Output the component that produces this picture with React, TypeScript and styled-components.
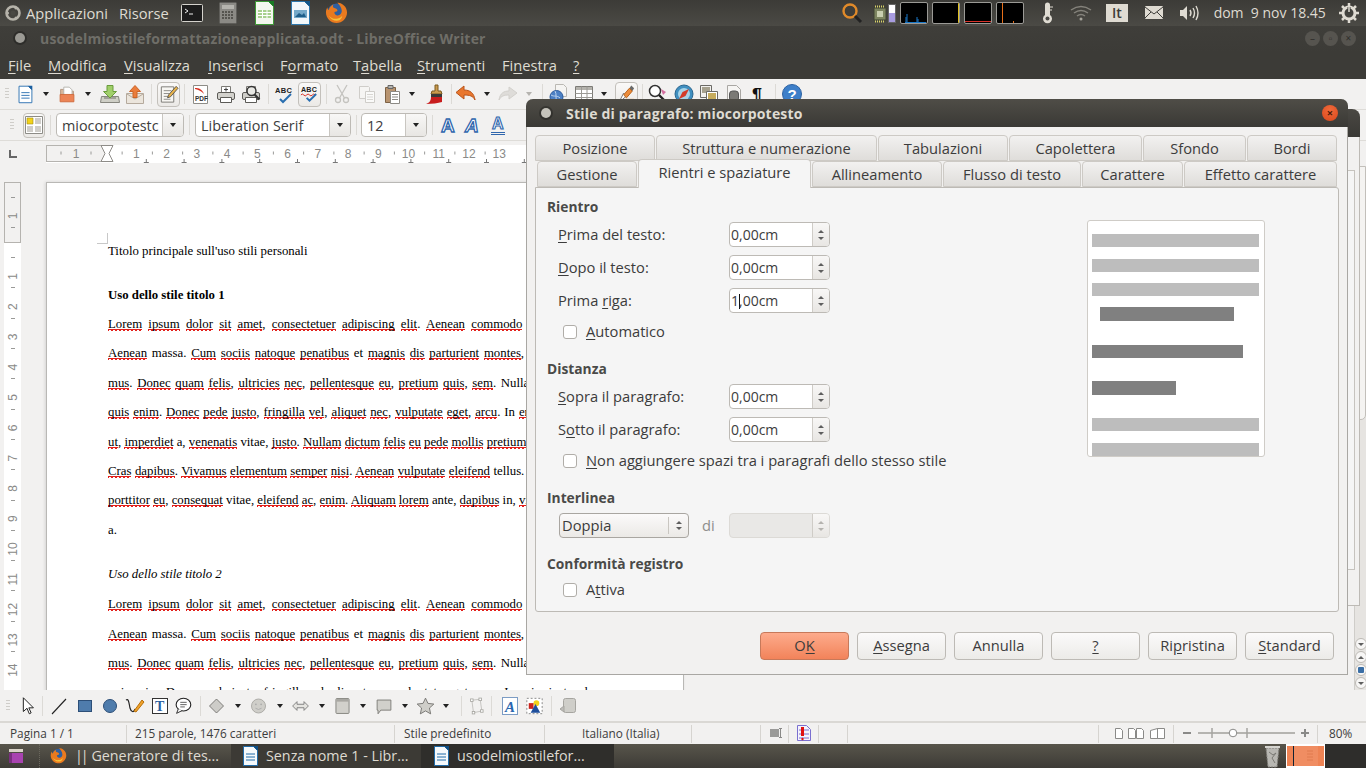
import React from "react";
import styled, { createGlobalStyle } from "styled-components";

const UI = `"Open Sans", "Noto Sans", sans-serif`;

const Global = createGlobalStyle`
  html, body { margin: 0; padding: 0; width: 1366px; height: 768px; overflow: hidden; background: #f2f1f0; }
  * { box-sizing: border-box; }
`;

const Desktop = styled.div`
  position: relative; width: 1366px; height: 768px; overflow: hidden;
  display: flex; flex-direction: column; font-family: ${UI}; background: #f2f1f0;
`;
const TopPanel = styled.div`
  height: 26px; flex: none; display: flex; align-items: center; color: #dfdbd2; font-size: 14.7px; padding-bottom: 1px;
  background: linear-gradient(#3c3b37, #4b4a45);
`;
const TrayGroup = styled.div`margin-left: auto; padding-right: 2px; display: flex; align-items: center; height: 100%;`;
const Slot = styled.div<{ $w: number }>`
  flex: 0 0 ${p => p.$w}px; width: ${p => p.$w}px; display: flex; align-items: center; justify-content: center;
  height: 100%; white-space: nowrap;
`;
const LeftSlot = styled(Slot)`justify-content: flex-start;`;
const ClockSlot = styled(LeftSlot)`font-size: 14px; padding-left: 2px;`;
const Graph = styled.div`
  width: 28px; height: 22px; margin-right: 4px; background: #000; border: 1px solid #9b9a96; border-radius: 2px;
  display: flex; overflow: hidden;
`;
const LangBox = styled.div`
  width: 22px; height: 18px; background: #dfdbd2; color: #3c3b37; font-size: 14px; font-weight: 600; text-align: center; line-height: 18px;
`;
const TitleBar = styled.div`
  height: 26px; flex: none; display: flex; align-items: center; background: linear-gradient(#3f3e3a, #3c3b37);
  color: #6f6e68; font-weight: 700; font-size: 14px; letter-spacing: .2px; padding: 0 0 2px 15px; position: relative;
`;
const WinDot = styled.span<{ $c?: string }>`
  width: 10px; height: 10px; border-radius: 50%; margin-right: 15px; flex: none;
  background: ${p => p.$c ?? "#9b9a94"}; box-shadow: 0 0 0 2px rgba(0,0,0,.25);
`;
const WinButtons = styled.div`margin-left: auto; margin-right: 10px; display: flex; gap: 3px;`;
const WinBtn = styled.div`
  width: 15px; height: 15px; border-radius: 50%; background: #56544f; color: #2f2e2b; font-size: 10px; line-height: 15px; text-align: center; font-weight: 400;
`;
const MenuBar = styled.div`
  height: 27px; flex: none; display: flex; align-items: center; padding: 0 0 2px 8px; background: #3c3b37; color: #dfdbd2; font-size: 14.7px;
  u { text-underline-offset: 2px; }
`;
const MenuItem = styled.div<{ $w: number }>`flex: 0 0 ${p => p.$w}px; white-space: nowrap;`;
const ToolRow = styled.div<{ $h: number; $line?: boolean }>`
  height: ${p => p.$h}px; flex: none; display: flex; align-items: center; background: #f2f1f0;
  border-bottom: ${p => (p.$line ? "1px solid #dedcd8" : "none")};
`;
const ToolSlot = styled.div<{ $w: number }>`
  flex: 0 0 ${p => p.$w}px; width: ${p => p.$w}px; height: 24px; display: flex; align-items: center; justify-content: center;
`;
const Boxed = styled.div`
  width: 23px; height: 25px; display: flex; align-items: center; justify-content: center;
  border: 1px solid #c3c0bb; border-radius: 4px; background: linear-gradient(#faf9f8, #ebe9e6);
`;
const Sep = styled.div`width: 1px; height: 20px; background: #dcdad6;`;
const Grip = styled.div`width: 4px; height: 12px; background: repeating-linear-gradient(#cfcdc9 0 1px, transparent 1px 3px);`;
const Caretish = styled.div<{ $off?: boolean }>`
  width: 0; height: 0; border-left: 3.5px solid transparent; border-right: 3.5px solid transparent;
  border-top: 4px solid ${p => (p.$off ? "#b5b3af" : "#222")};
`;
const Combo = styled.div<{ $w: number; $btn: number }>`
  flex: 0 0 ${p => p.$w}px; height: 24px; display: flex; align-items: stretch; background: #fff; border: 1px solid #bdbab5; border-radius: 4px;
  font-size: 14.4px; color: #3c3c3c; overflow: hidden;
  & > span { flex: 1; min-width: 0; padding-left: 5px; line-height: 23px; overflow: hidden; white-space: nowrap; }
  & > div { flex: 0 0 ${p => p.$btn}px; border-left: 1px solid #c9c6c1; background: linear-gradient(#f8f7f6, #e8e6e3); display: flex; align-items: center; justify-content: center; }
`;
const RulerRow = styled.div`height: 25px; flex: none; display: flex; align-items: center; background: #f2f1f0;`;
const Corner = styled.div`width: 46px; flex: none; padding-left: 9px; display: flex; align-items: center;`;
const Workspace = styled.div`flex: none; height: 524px; display: flex; background: #f2f1f0; overflow: hidden;`;
const VRulerBox = styled.div`margin: 16px 25px 0 4px; width: 17px; flex: none;`;
const Page = styled.div`
  margin-top: 16px; width: 638px; flex: none; height: 700px; background: #fff; border: 1px solid #b9b8b5; box-shadow: -1px 0 3px rgba(0,0,0,.12);
  padding: 57px 0 0 61px; font-family: "Liberation Serif", serif; font-size: 12.8px; color: #000; position: relative;
`;
const CropMark = styled.div`
  position: absolute; left: 50px; top: 50px; width: 11px; height: 11px; border-right: 1px solid #c8c8c8; border-bottom: 1px solid #c8c8c8;
`;
const Para = styled.div<{ $mt?: number }>`height: 22px; line-height: 22px; margin-top: ${p => p.$mt ?? 0}px; white-space: nowrap;`;
const Gap = styled.div<{ $h: number }>`height: ${p => p.$h}px; flex: none;`;
const HGap = styled.div<{ $w: number }>`width: ${p => p.$w}px; flex: none;`;
const Line = styled.div<{ $long?: boolean }>`
  width: 513px; height: 29.4px; line-height: 29.4px; overflow: hidden; text-align: justify; text-align-last: justify;
  white-space: ${p => (p.$long ? "nowrap" : "normal")};
`;
const LastLine = styled(Line)`text-align-last: left;`;
const Wavy = styled.span`
  background-image: linear-gradient(45deg, transparent 58%, #e3201b 62%, #e3201b 88%, transparent 92%), linear-gradient(135deg, transparent 8%, #e3201b 12%, #e3201b 38%, transparent 42%);
  background-size: 4px 3px; background-repeat: repeat-x; background-position: 0 100%;
  padding-bottom: 1px;
`;
const Filler = styled.div`flex: 1;`;
const VScroll = styled.div`
  width: 12px; flex: none; margin-right: 0; display: flex; flex-direction: column; align-items: center; border-left: 1px solid #cfcdc9; background: #e6e4e1;
`;
const ScrollThumb = styled.div`width: 11px; height: 254px; margin-top: 0; background: #f4f3f1; border: 1px solid #c2bfba; border-radius: 0 0 5px 5px;`;
const ScrollTrack = styled.div`flex: 1;`;
const ScrollEnd = styled.div`
  width: 12px; height: 12px; background: #f7f6f5; border: 1px solid #bdbab5; border-radius: 6px; margin-bottom: 1px; display: flex; align-items: center; justify-content: center;
`;
const StatusBar = styled.div`
  height: 23px; flex: none; display: flex; background: #f2f1f0; border-top: 2px solid #dad8d4; color: #3c3c3c; font-size: 11.8px; align-items: center;
`;
const StatusCell = styled.div<{ $w: number; $pl?: number; $line?: boolean }>`
  flex: 0 0 ${p => p.$w}px; height: 18px; line-height: 16px; padding-left: ${p => p.$pl ?? 0}px; padding-bottom: 2px; white-space: nowrap; display: flex; align-items: center;
  border-right: ${p => (p.$line === false ? "none" : "1px solid #d6d4d0")}; 
`;
const Taskbar = styled.div`
  height: 24px; flex: none; display: flex; align-items: center; color: #dfdbd2; font-size: 14.3px;
  background: linear-gradient(#58554b, #3d3b36);
`;
const TaskStart = styled.div`width: 40px; height: 100%; display: flex; align-items: center; padding-left: 8px; border-right: 1px dotted #6a675d;`;
const TaskItem = styled.div<{ $w: number; $pl?: number; $active?: number }>`
  flex: 0 0 ${p => p.$w}px; height: 100%; display: flex; align-items: center; gap: 8px; padding: 0 0 1px ${p => p.$pl ?? 10}px; white-space: nowrap; overflow: hidden;
  background: ${p => (p.$active === 2 ? "#2f2e2b" : p.$active === 1 ? "#3c3a35" : "transparent")};
`;
const Bars = styled.span`letter-spacing: -2px; margin-right: 1px;`;
const TaskRight = styled.div`margin-left: auto; display: flex; align-items: center; height: 100%;`;
const Switcher = styled.div`width: 39px; height: 100%; background: #ee8354; border: 1px solid #fff; border-width: 2px 1px; display: flex; align-items: center; justify-content: center;`;
const SwitcherRest = styled.div`width: 41px; height: 100%; background: #2e2d2b;`;

/* dialog */
const GhostWindow = styled.div`
  position: absolute; left: 1300px; top: 109px; width: 60px; height: 497px; background: #f2f1f0; border: 1px solid #bdbab5; border-top: 0; border-radius: 8px 8px 0 0;
`;
const GhostTitle = styled.div`height: 28px; background: linear-gradient(#4a4843, #3a3935); border-radius: 8px 8px 0 0; margin: 0 -1px;`;
const GhostInner = styled.div`margin: 33px 4px 0 0; height: 400px; border: 1px solid #c6c3be; background: #f5f5f5;`;
const Dialog = styled.div`
  position: absolute; left: 526px; top: 99px; width: 822px; height: 576px; background: #f2f1f0; border: 1px solid #a9a7a3; border-top: 0; border-radius: 7px 7px 0 0;
  color: #3c3c3c; font-size: 14.7px; display: flex; flex-direction: column;
  u { text-underline-offset: 2px; }
`;
const DialogTitle = styled.div`
  height: 28px; flex: none; margin: 0 -1px; display: flex; align-items: center; padding-left: 15px; color: #dfdbd2; font-weight: 700; font-size: 14px; letter-spacing: .2px;
  background: linear-gradient(#4f4d47, #3a3935); border-radius: 7px 7px 0 0;
`;
const CloseBtn = styled.div`
  margin-left: auto; margin-right: 10px; width: 16px; height: 16px; border-radius: 50%; background: radial-gradient(circle at 50% 30%, #f0693a, #d9481c);
  color: #4a1a08; font-size: 11px; line-height: 15px; text-align: center; font-weight: 700;
`;
const TabRow = styled.div<{ $pl: number; $mt?: number }>`
  display: flex; gap: 1px; padding-left: ${p => p.$pl}px; height: 26px; margin-top: ${p => p.$mt ?? 0}px; flex: none; align-items: flex-end; position: relative;
`;
const Tab = styled.div<{ $w: number; $on?: boolean; $lh?: number }>`
  flex: 0 0 ${p => p.$w}px; height: ${p => (p.$on ? 29 : 26)}px; border: 1px solid #cdcac5; border-bottom: ${p => (p.$on ? "0" : "1px solid #cdcac5")}; border-radius: 4px 4px 0 0;
  background: ${p => (p.$on ? "#f5f5f5" : "linear-gradient(#f2f1f0, #dfddda)")};
  text-align: center; line-height: ${p => p.$lh ?? 25}px; white-space: nowrap; position: relative; z-index: ${p => (p.$on ? 2 : 0)};
  margin-bottom: ${p => (p.$on ? -1 : 0)}px;
`;
const Panel = styled.div`
  margin: 0 8px; height: 425px; flex: none; background: #f5f5f5; border: 1px solid #bdbab5; border-radius: 0 3px 3px 3px; display: flex; position: relative; z-index: 1;
`;
const FormCol = styled.div`flex: 1; padding: 10px 0 0 11px;`;
const Heading = styled.div<{ $mt?: number }>`height: 18px; line-height: 18px; font-weight: 700; font-size: 13.8px; margin-top: ${p => p.$mt ?? 0}px; margin-bottom: 6px; color: #4a4a48;`;
const FieldRow = styled.div<{ $mb?: number }>`height: 25px; display: flex; align-items: center; padding-left: 11px; margin-bottom: ${p => p.$mb ?? 8}px;`;
const FieldLabel = styled.div`flex: 0 0 171px; white-space: nowrap; height: 20px; line-height: 18px;`;
const Spin = styled.div<{ $off?: boolean }>`
  flex: 0 0 101px; height: 25px; display: flex; border: 1px solid ${p => (p.$off ? "#dcdad6" : "#bdbab5")}; border-radius: 4px; overflow: hidden; background: ${p => (p.$off ? "#e9e8e6" : "#fff")};
  font-size: 14px;
  & > span { flex: 1; padding-left: 1px; line-height: 23px; white-space: nowrap; }
`;
const SpinBtns = styled.div`
  flex: 0 0 17px; border-left: 1px solid #cfccc7; background: linear-gradient(#f8f7f6, #e8e6e3); display: flex; flex-direction: column; align-items: center; justify-content: center; gap: 4px;
`;
const Up = styled.div<{ $off?: boolean }>`width: 0; height: 0; border-left: 3px solid transparent; border-right: 3px solid transparent; border-bottom: 3px solid ${p => (p.$off ? "#b5b3af" : "#5e5e5e")};`;
const Down = styled.div<{ $off?: boolean }>`width: 0; height: 0; border-left: 3px solid transparent; border-right: 3px solid transparent; border-top: 3px solid ${p => (p.$off ? "#b5b3af" : "#5e5e5e")};`;
const TextCaret = styled.span`display: inline-block; width: 1px; height: 15px; background: #111; vertical-align: -3px; margin: 0 -1px 0 0;`;
const CheckRow = styled.div<{ $mt?: number }>`height: 16px; display: flex; align-items: center; gap: 9px; padding-left: 16px; margin-top: ${p => p.$mt ?? 0}px; white-space: nowrap;`;
const CheckText = styled.span`height: 16px; line-height: 14px;`;
const Check = styled.div`width: 14px; height: 14px; flex: none; background: #fff; border: 1px solid #b0ada8; border-radius: 3px;`;
const Select = styled.div`
  flex: 0 0 130px; height: 25px; display: flex; align-items: center; border: 1px solid #a9a6a1; border-radius: 4px; background: linear-gradient(#fbfafa, #ebe9e6); padding-left: 2px; margin: 0 40px 0 1px; position: relative;
`;
const SelectText = styled.span`flex: 1; line-height: 20px; height: 22px;`;
const SelectBtn = styled.div`flex: 0 0 20px; height: 17px; border-left: 1px solid #c9c6c1; display: flex; flex-direction: column; align-items: center; justify-content: center; gap: 3px;`;
const DiLabel = styled.span`position: absolute; left: 142px; color: #8e8e8c; top: 1px;`;
const Preview = styled.div`
  flex: none; width: 178px; height: 237px; margin: 32px 73px 0 0; background: #fff; border: 1px solid #cfccc7; border-radius: 3px; padding: 13px 5px 0 4px; overflow: hidden;
`;
const PBar = styled.div<{ $w: number; $h?: number; $mt: number; $ml?: number; $dark?: boolean }>`
  width: ${p => p.$w}px; height: ${p => p.$h ?? 13}px; margin: ${p => p.$mt}px 0 0 ${p => p.$ml ?? 0}px; background: ${p => (p.$dark ? "#808080" : "#bdbdbd")};
`;
const ButtonRow = styled.div`display: flex; justify-content: flex-end; gap: 8px; margin: 20px 13px 0 0;`;
const DlgButton = styled.div<{ $ok?: boolean }>`
  width: 89px; height: 28px; line-height: 24px; text-align: center; border-radius: 4px; white-space: nowrap;
  border: 1px solid ${p => (p.$ok ? "#c7795a" : "#bdbab5")};
  background: ${p => (p.$ok ? "linear-gradient(#fdab8c, #f2835a)" : "linear-gradient(#fbfafa, #ecebe8)")};
`;

/* ---------- icons ---------- */
const S = ({ children, w = 24, h = 24, vb }: { children: React.ReactNode; w?: number; h?: number; vb?: string }) => (
  <svg width={w} height={h} viewBox={vb ?? `0 0 ${w} ${h}`} fontFamily="Liberation Sans, sans-serif">{children}</svg>
);
const ic: Record<string, React.ReactNode> = {
  new: <S><path d="M5.500 3.500h10l4 4v14h-14z" fill="#fff" stroke="#2a6fb0" /><path d="M15 3h5v5z" fill="#1a5f9f" /><path d="M8 10.500h9M8 13.500h9M8 16.500h9" stroke="#2a6fb0" /></S>,
  open: <S><path d="M5 7h5l1 2h8v5H5z" fill="#d8b79c" stroke="#b3957e" /><path d="M8.500 4.500h6l3 3v6h-9z" fill="#fff" stroke="#b5b2ad" /><path d="M4.500 12.500h15v8h-15z" fill="#ec8456" stroke="#cf6a3c" /></S>,
  save: <S><path d="M3.500 14.500h17l1 6h-19z" fill="#cfcfc6" stroke="#86867e" /><path d="M6 15h12v2H6z" fill="#a0a097" /><path d="M9 3.500h6v6h3.500l-6.500 6.500-6.500-6.500H9z" fill="#a0cf6a" stroke="#6a9c3c" /></S>,
  export: <S><path d="M3.500 11.500h17v10h-17z" fill="#ebe5dc" stroke="#b5aa9d" /><path d="M4 12l8 5 8-5" fill="none" stroke="#b5aa9d" /><path d="M12 3.500l5.500 6h-3.500v6h-4v-6H6.500z" fill="#ea7d3c" stroke="#cc6426" /></S>,
  edit: <S w={22} h={22}><path d="M3.500 3.500h13v16h-13z" fill="#f7f6f2" stroke="#7c7b76" /><path d="M6 7.500h8M6 10.500h6M6 13.500h5M6 16.500h7" stroke="#8d8c87" /><path d="M19 3l2 2-8 9-3 1 1-3z" fill="#e9b44c" stroke="#3c3c3c" strokeWidth=".8" /></S>,
  pdf: <S><path d="M5.500 3.500h14v18h-14z" fill="#fff" stroke="#8d8c87" /><path d="M7 6c4 0 7 1 9 6-3-3-5-4-9-5z" fill="#d92e20" /><text x="7" y="19" fontSize="6.500" fontWeight="700" fill="#333">PDF</text></S>,
  print: <S><path d="M7.500 4.500h9v6h-9z" fill="#fff" stroke="#7c7b76" /><rect x="3.500" y="10.500" width="17" height="7" rx="1.500" fill="#d3d2cd" stroke="#5c5b57" /><path d="M6.500 15.500h11v5h-11z" fill="#fff" stroke="#5c5b57" /><path d="M10 7.500h4M12 5.500v4" stroke="#444" /></S>,
  preview: <S><path d="M7.500 4.500h9v6h-9z" fill="#fff" stroke="#7c7b76" /><rect x="3.500" y="10.500" width="17" height="7" rx="1.500" fill="#cfcec9" stroke="#5c5b57" /><path d="M6.500 15.500h11v5h-11z" fill="#fff" stroke="#5c5b57" /><circle cx="12.500" cy="9" r="4.500" fill="#e8e8e4" stroke="#333" strokeWidth="1.400" /><path d="M15.500 12.500l5 5" stroke="#333" strokeWidth="2.200" /></S>,
  abc: <S><text x="3" y="11" fontSize="7.500" fontWeight="700" fill="#222" letterSpacing=".3">ABC</text><path d="M8 17l3 3 8-8" fill="none" stroke="#2a6fb0" strokeWidth="2" /></S>,
  abc2: <S w={22} h={22}><text x="2" y="9" fontSize="7.500" fontWeight="700" fill="#222" letterSpacing=".3">ABC</text><path d="M2 12q1.500-2 3 0t3 0 3 0 3 0 3 0" fill="none" stroke="#d5281e" /><path d="M8 15l3 3 7-7" fill="none" stroke="#2a6fb0" strokeWidth="2" /></S>,
  cut: <S><g fill="none" stroke="#c4c3bf" strokeWidth="1.300"><circle cx="8" cy="18" r="2.500" /><circle cx="16" cy="18" r="2.500" /><path d="M9.500 16L17 3M14.500 16L7 3" /></g></S>,
  copy: <S><path d="M4.500 4.500h9l1 1v11h-10z" fill="#f6f5f3" stroke="#cfcdc9" /><path d="M10.500 9.500h9v11h-9z" fill="#fafaf9" stroke="#cfcdc9" /><path d="M12 12.500h6M12 15h6M12 17.500h6" stroke="#d8d6d2" /></S>,
  paste: <S><path d="M5.500 5.500h10v15h-10z" fill="#b89470" stroke="#7d6245" /><path d="M8 3.500h5v3H8z" fill="#b5b3ad" stroke="#666" /><path d="M10.500 9.500h9v12h-9z" fill="#fff" stroke="#8c8a85" /><path d="M12 12.500h6M12 15h6M12 17.500h6" stroke="#8c8a85" /></S>,
  brush: <S><path d="M13 3h3v6h3l1 3H9l1-3h3z" fill="#c99a4f" stroke="#7c5a1f" /><path d="M9 12h11v3H9z" fill="#3a3a3a" /><path d="M9 15h11v5c-4 1-10 2-16 2 3-1 5-3 5-7z" fill="#c81d1d" /></S>,
  undo: <S><path d="M10 4v4c6 0 10 3 11 10-2-4-5-5-11-5v4l-8-6.500z" fill="#e9772e" stroke="#b9541a" /></S>,
  redo: <S><path d="M13 5v4c-5 0-9 2-10 9 2-4 5-5 10-5v4l8-6z" fill="#dedcd9" stroke="#d2d0cc" /></S>,
  link: <S><path d="M8.500 2.500h8l3 3v9h-11z" fill="#f5f4f2" stroke="#bab8b3" /><circle cx="9.500" cy="15" r="6.500" fill="#4c80c4" stroke="#2a5a9c" /><path d="M4 13c3 2 6 0 9 3M8 9c2 3 0 7 2 12" stroke="#bcd3ee" fill="none" /></S>,
  table: <S><path d="M3.500 4.500h17v15h-17z" fill="#fff" stroke="#7c7b76" /><path d="M4 5h16v3H4z" fill="#b5b3ad" /><path d="M3.500 11.500h17M3.500 15.500h17M9.500 4.500v15M15 4.500v15" stroke="#9c9a95" /></S>,
  draw: <S w={22} h={22}><path d="M3 20L8 10l3 3z" fill="#fff" stroke="#777" /><path d="M16 2l3 3-2 3-3-3z" fill="#6a6a6a" /><path d="M14 5l3 3-6 7-3-3z" fill="#ed8d3c" stroke="#b65e16" /><path d="M10 16h9v4h-9z" fill="#e9b680" /></S>,
  find: <S><circle cx="9" cy="9" r="5.500" fill="#fff" stroke="#333" strokeWidth="1.500" /><path d="M13 13l7 7" stroke="#222" strokeWidth="2.400" /><path d="M15 7l5 3-3 3z" fill="#d46fa0" /></S>,
  compass: <S><circle cx="12" cy="12" r="9" fill="#3f8fc0" stroke="#2a668f" /><circle cx="12" cy="12" r="6" fill="#a8d4e8" /><path d="M7 17l3.500-7 6.500-3-3.500 7z" fill="#d33c2a" /></S>,
  gallery: <S><path d="M3.500 3.500h11v12h-11z" fill="#f2f1ee" stroke="#6b6a66" /><path d="M5 5h8v6H5z" fill="#a7a28f" /><path d="M9.500 9.500h11v12h-11z" fill="#fff" stroke="#6b6a66" /><path d="M11 11h8v7h-8z" fill="#c7ac5c" /></S>,
  data: <S><path d="M5.500 3.500h9l4 4v14h-13z" fill="#f6f5f3" stroke="#a9a7a3" /><rect x="7.500" y="9" width="9" height="10" rx="3" fill="#7b7a76" stroke="#555" /></S>,
  pilcrow: <S><text x="6" y="19" fontSize="18" fontWeight="700" fill="#111">¶</text></S>,
  help: <S><circle cx="12" cy="12" r="9.500" fill="#3d7fc9" stroke="#2c62a3" /><text x="7.500" y="18" fontSize="15" fontWeight="700" fill="#fff">?</text></S>,
  styles: <S w={20} h={20}><path d="M1.500 1.500h17v17h-17z" fill="#fff" stroke="#8d8c87" /><path d="M3 3h6v6H3z" fill="#f2d21a" stroke="#a08c10" strokeWidth=".6" /><path d="M11 3h6v6h-6zM3 11h6v6H3zM11 11h6v6h-6z" fill="#cfcdc9" /></S>,
  boldA: <S><text x="4" y="19" fontSize="19" fontWeight="700" fill="#fff" stroke="#2f66ad" strokeWidth="1.300">A</text></S>,
  italA: <S><text x="3" y="19" fontSize="19" fontWeight="700" fontStyle="italic" fill="#fff" stroke="#2f66ad" strokeWidth="1.300">A</text></S>,
  underA: <S><text x="6" y="16" fontSize="16" fontWeight="700" fill="#fff" stroke="#2f66ad" strokeWidth="1.100">A</text><path d="M5 19.500h14M5 21.500h14" stroke="#2f66ad" /></S>,
  select: <S><path d="M8 3v15l4-3.500 2.500 6 2-1-2.500-5.500h5z" fill="#fff" stroke="#111" /></S>,
  line: <S><path d="M5 20L19 5" stroke="#222" strokeWidth="1.100" /></S>,
  rect: <S><rect x="5.500" y="6.500" width="13" height="11" fill="#4f7cac" stroke="#2d4f78" /></S>,
  ellipse: <S><circle cx="12" cy="12" r="6.500" fill="#4f7cac" stroke="#2d4f78" /></S>,
  curve: <S><path d="M3 6c3-2 3 4 4 8s4 5 5 1" fill="none" stroke="#222" strokeWidth="1.200" /><path d="M11 17l8-11 2 2-8 10z" fill="#f0a22a" stroke="#b66f0c" /></S>,
  textT: <S><rect x="4.500" y="4.500" width="15" height="15" fill="#fff" stroke="#333" /><text x="7" y="17" fontSize="14" fontWeight="700" fontFamily="Liberation Serif, serif" fill="#2a5fa0">T</text></S>,
  callout: <S><ellipse cx="12.500" cy="10.500" rx="8" ry="7" fill="#fff" stroke="#222" strokeWidth="1.200" /><path d="M7 15l-2 5 6-3" fill="#fff" stroke="#222" /><path d="M9 8h7M9 10.500h7M9 13h5" stroke="#555" /></S>,
  diamond: <S><path d="M12 4l8 8-8 8-8-8z" fill="#cdccc8" stroke="#6f6e6a" /></S>,
  smiley: <S><circle cx="12" cy="12" r="8" fill="#cfcec9" stroke="#a6a5a0" /><circle cx="9" cy="10" r="1" fill="#aaa" /><circle cx="15" cy="10" r="1" fill="#aaa" /><path d="M8.500 14.500q3.500 3 7 0" fill="none" stroke="#aaa" /></S>,
  arrows: <S><path d="M3 12l5-5v3h8V7l5 5-5 5v-3H8v3z" fill="#e5e4e0" stroke="#777" /></S>,
  flow: <S><rect x="4.500" y="3.500" width="15" height="17" rx="1" fill="#d1d0cb" stroke="#7c7b76" /><path d="M5 4h14v3H5z" fill="#a8a7a2" /></S>,
  bubble: <S><path d="M4.500 5.500h15v11h-11l-3 4v-4h-1z" fill="#d1d0cb" stroke="#7c7b76" /></S>,
  star: <S><path d="M12 3l2.800 6 6.700.800-5 4.500 1.400 6.700-5.900-3.400-5.900 3.400 1.400-6.700-5-4.500 6.700-.800z" fill="#cfcec9" stroke="#6f6e6a" /></S>,
  points: <S><path d="M7 5l10-1 2 14-10 2z" fill="none" stroke="#bdbcb8" /><g fill="#fff" stroke="#a6a5a0"><rect x="5.500" y="3.500" width="3" height="3" /><rect x="15.500" y="2.500" width="3" height="3" /><rect x="17.500" y="16.500" width="3" height="3" /><rect x="7.500" y="18.500" width="3" height="3" /></g></S>,
  fontwork: <S><rect x="4.500" y="3.500" width="15" height="17" fill="#fff" stroke="#7c9cc4" /><text x="7" y="18" fontSize="15" fontStyle="italic" fontWeight="700" fontFamily="Liberation Serif, serif" fill="#2a66b0">A</text></S>,
  image: <S><rect x="4" y="4" width="16" height="16" fill="#fff" stroke="#888" strokeDasharray="2 2" /><circle cx="14" cy="9" r="3" fill="#f2d21a" /><path d="M6 9h5v6H6z" fill="#c9231c" /><path d="M8 19l5-9 5 9z" fill="#1f4f9c" /></S>,
  extrude: <S><rect x="7.500" y="4.500" width="12" height="14" rx="2" fill="#cfcec9" stroke="#a6a5a0" /><path d="M4 15l4-3v6z" fill="#bdbcb8" stroke="#a6a5a0" /></S>,
};

type T = [string, number, boolean?];
const mainTools: T[] = [
  ["grip", 14], ["new", 22], ["arrow", 20], ["open", 22], ["arrow", 20], ["save", 24], ["export", 26], ["sep", 6], ["edit", 28, true], ["sep", 4], ["pdf", 28], ["print", 24], ["preview", 26], ["sep", 8],
  ["abc", 24], ["abc2", 26, true], ["sep", 8], ["cut", 24], ["copy", 26], ["paste", 24], ["arrow", 16], ["brush", 28], ["sep", 6], ["undo", 24], ["arrow", 18], ["redo", 24], ["offarrow", 18], ["sep", 8],
  ["link", 26], ["table", 24], ["arrow", 16], ["draw", 28, true], ["sep", 4], ["find", 28], ["compass", 24], ["gallery", 26], ["data", 24], ["pilcrow", 24], ["sep", 10], ["help", 24],
];
const drawTools: T[] = [
  ["grip", 16], ["select", 22], ["sep", 8], ["line", 26], ["rect", 25], ["ellipse", 25], ["curve", 25], ["textT", 25], ["callout", 22], ["sep", 12], ["diamond", 21], ["arrow", 21], ["smiley", 21], ["arrow", 21],
  ["arrows", 21], ["arrow", 21], ["flow", 21], ["arrow", 20], ["bubble", 22], ["arrow", 20], ["star", 21], ["arrow", 20], ["sep", 10], ["points", 20], ["sep", 10], ["fontwork", 27], ["image", 23], ["sep", 10], ["extrude", 24],
];
const ToolItem = ({ t }: { t: T }) => {
  const [k, w, box] = t;
  return (
    <ToolSlot $w={w}>
      {k === "sep" ? <Sep /> : k === "grip" ? <Grip /> : k === "arrow" ? <Caretish /> : k === "offarrow" ? <Caretish $off /> : box ? <Boxed>{ic[k]}</Boxed> : ic[k]}
    </ToolSlot>
  );
};

/* panel icons */
const Ubuntu = () => <S w={16} h={16}><circle cx="8" cy="8" r="6.500" fill="none" stroke="#b6b3aa" strokeWidth="2.600" /><circle cx="8" cy="8" r="2.500" fill="#4a4944" /><g fill="#b6b3aa"><circle cx="2.500" cy="8" r="1.600" /><circle cx="11" cy="3" r="1.600" /><circle cx="11" cy="13" r="1.600" /></g></S>;
const Terminal = () => <S w={22} h={18}><rect x=".5" y=".5" width="21" height="17" rx="1" fill="#1c1c1c" stroke="#d5d3cd" /><path d="M4 5l3 2-3 2M8 10h4" stroke="#eee" fill="none" /></S>;
const Calc = () => <S w={18} h={22}><rect x=".5" y=".5" width="17" height="21" rx="1" fill="#8b8a85" stroke="#5f5e5a" /><rect x="3" y="3" width="12" height="4" fill="#b5b4ae" /><path d="M3 10h12M3 13h12M3 16h12" stroke="#55544f" strokeWidth="2" strokeDasharray="2 1" /></S>;
const Sheet = () => <S w={19} h={24}><path d="M.5.500h13l5 5v18H.5z" fill="#f4f7ef" stroke="#3d9a35" /><path d="M13 0h6v6z" fill="#187a25" /><path d="M3 9h13v8H3z" fill="#a8d08d" /><path d="M3 11.500h13M3 14.500h13M7.500 9v8M12 9v8" stroke="#fff" /></S>;
const Impress = () => <S w={19} h={24}><path d="M.5.500h13l5 5v18H.5z" fill="#f2f7fa" stroke="#2e78ad" /><path d="M13 0h6v6z" fill="#14578a" /><path d="M3 9h13v8H3z" fill="#74a9c9" /><path d="M4 16l4-4 3 2 2-2 2 4z" fill="#1f5f8a" /></S>;
const Firefox = ({ s = 23 }: { s?: number }) => (
  <svg width={s} height={s} viewBox="0 0 24 24">
    <circle cx="12" cy="12" r="9.500" fill="#2f5f9f" />
    <path d="M12 1.500c6 0 11 4.500 11 10.500s-5 11-11 11S1 18 1 12c0-2 .5-4 1.500-5.500 0 1.500.5 2.500 1.500 3 .5-3 3-5 5-6-1 1.500-1 3 0 3.500 2 .5 4 1 4 3 0 1-2 1.500-3 1.500-.5 1 0 3 2.500 3.500 3 .5 5-2 5-4.500 0-4-3-7-5-9z" fill="#ea7a1f" />
    <path d="M15 20c-4 1.500-9-.5-11-5 2 2.500 5 4 8 3.500 2-.3 4-.5 6-3-.3 2-1.300 3.700-3 4.500z" fill="#f6c23a" />
  </svg>
);
const DocSmall = () => <S w={15} h={20}><path d="M.5.500h10l4 4v15H.5z" fill="#f5f9fc" stroke="#1f6aa8" /><path d="M10 0h5v5z" fill="#0f4f85" /><path d="M3 8h9M3 11h9M3 14h9" stroke="#1f6aa8" /></S>;

const bars = (c: string, ds: string) => <svg width="26" height="20"><path d={ds} stroke={c} fill="none" /></svg>;

/* rulers */
const HRuler = () => {
  const nums = Array.from({ length: 13 }, (_, i) => i + 1);
  const cm = 30.25;
  const m = 61;
  return (
    <svg width="640" height="18" fontFamily="Liberation Sans, sans-serif" fontSize="12" fill="#8a8a88">
      <rect x="0" y="0" width="638" height="18" fill="#fff" />
      <rect x=".5" y=".5" width={m} height="16" fill="#f2f1f0" stroke="#b5b3af" />
      <text x={30} y={13} textAnchor="middle">1</text>
      <path d="M15 6.500v3M45 6.500v3" stroke="#9a9a98" />
      {nums.map(n => <text key={n} x={m + cm * n - 1} y={13} textAnchor="middle">{n}</text>)}
      {nums.map(n => <path key={n} d={`M${m + cm * (n - .5)} 6.500v3`} stroke="#9a9a98" />)}
      {Array.from({ length: 13 }, (_, i) => <path key={i} d={`M${m + 37.8 * (i + 1) - 1} 17.500h5M${m + 37.8 * (i + 1) + 1.500} 14v3`} stroke="#777" />)}
      <path d="M55 .5h12l-4 8 4 8H55l4-8z" fill="#fff" stroke="#8e8c88" />
    </svg>
  );
};
const VRuler = () => {
  const nums = Array.from({ length: 14 }, (_, i) => i + 1);
  const cm = 30.3;
  const m = 60;
  return (
    <svg width="17" height="510" fontFamily="Liberation Sans, sans-serif" fontSize="12" fill="#8a8a88">
      <rect width="17" height="510" fill="#fff" />
      <rect x=".5" y=".5" width="16" height={m} fill="#f2f1f0" stroke="#b5b3af" />
      <text transform={`translate(13,34) rotate(-90)`} textAnchor="middle">1</text>
      <path d="M7 15.500h4M7 45.500h4" stroke="#9a9a98" />
      {nums.map(n => <text key={n} transform={`translate(13,${m + cm * n + 4}) rotate(-90)`} textAnchor="middle">{n}</text>)}
      {nums.map(n => <path key={n} d={`M7 ${Math.round(m + cm * (n - .5)) + .5}h4`} stroke="#9a9a98" />)}
    </svg>
  );
};

/* text */
const clean = new Set(["massa", "et", "In", "a", "vitae", "tellus", "ante", "in", "Nulla", "leo", "Integer"]);
const Words = ({ s }: { s: string }) => (
  <>
    {s.split(" ").map((tok, i) => {
      const m = tok.match(/^([A-Za-z]+)(.*)$/);
      const sp = i > 0 ? " " : "";
      if (!m || clean.has(m[1])) return <React.Fragment key={i}>{sp}{tok}</React.Fragment>;
      return <React.Fragment key={i}>{sp}<Wavy>{m[1]}</Wavy>{m[2]}</React.Fragment>;
    })}
  </>
);
const block1 = [
  "Lorem ipsum dolor sit amet, consectetuer adipiscing elit. Aenean commodo ligula eget dolor. Aenean",
  "Aenean massa. Cum sociis natoque penatibus et magnis dis parturient montes, nascetur ridiculus",
  "mus. Donec quam felis, ultricies nec, pellentesque eu, pretium quis, sem. Nulla consequat massa",
  "quis enim. Donec pede justo, fringilla vel, aliquet nec, vulputate eget, arcu. In enim justo, rhoncus",
  "ut, imperdiet a, venenatis vitae, justo. Nullam dictum felis eu pede mollis pretium. Integer tincidunt.",
  "Cras dapibus. Vivamus elementum semper nisi. Aenean vulputate eleifend tellus. Aenean leo ligula,",
  "porttitor eu, consequat vitae, eleifend ac, enim. Aliquam lorem ante, dapibus in, viverra quis, feugiat",
];

export default function App() {
  return (
    <Desktop>
      <Global />
      <TopPanel>
        <Slot $w={26}><Ubuntu /></Slot>
        <LeftSlot $w={93}>Applicazioni</LeftSlot>
        <LeftSlot $w={55}>Risorse</LeftSlot>
        <Slot $w={36}><Terminal /></Slot>
        <Slot $w={36}><Calc /></Slot>
        <Slot $w={36}><Sheet /></Slot>
        <Slot $w={36}><Impress /></Slot>
        <Slot $w={36}><Firefox /></Slot>
        <TrayGroup>
          <Slot $w={28}>
            <S w={22} h={22}><circle cx="9" cy="9" r="6.500" fill="none" stroke="#e08a2a" strokeWidth="2.400" /><circle cx="9" cy="9" r="5" fill="#3f3e3a" /><path d="M14 14l6 6" stroke="#222" strokeWidth="3" /></S>
          </Slot>
          <Slot $w={34}>
            <S w={28} h={22}><rect x="5" y="6" width="12" height="12" fill="#7d8560" stroke="#3f4330" /><rect x="8" y="9" width="6" height="6" fill="#c9cfb0" /><path d="M6 4.500h10M6 19.500h10" stroke="#d9d36a" strokeWidth="2" strokeDasharray="1 1" /><rect x="19.500" y="2.500" width="7" height="18" fill="#fff" stroke="#666" /><rect x="20" y="11" width="6" height="9" fill="#a89ce0" /></S>
          </Slot>
          <Graph>{bars("#1a78c8", "M5 20v-6M6 20v-9M16 20v-6M17 20v-4M4 19.500h21")}</Graph>
          <Graph>{bars("#e0c020", "M25.500 0v20")}</Graph>
          <Graph>{bars("#d8322a", "M0 18.500h26")}</Graph>
          <Graph>{bars("#e8701a", "M5.500 0v20M16.500 18v2")}</Graph>
          <Slot $w={37}>
            <S w={14} h={22}><path d="M5 3a2.500 2.500 0 0 1 5 0v10a4.500 4.500 0 1 1-5 0z" fill="#dfdbd2" /><path d="M10 5h3M10 8h2" stroke="#dfdbd2" /><circle cx="7.500" cy="16.500" r="2" fill="#4a4944" /></S>
          </Slot>
          <Slot $w={32}>
            <S w={22} h={16}><g fill="none" stroke="#85837c" strokeWidth="1.500"><path d="M1 5q10-7 20 0" /><path d="M4 8q7-5 14 0" /><path d="M7 11q4-3 8 0" /></g><circle cx="11" cy="14" r="1.500" fill="#a6a49c" /></S>
          </Slot>
          <Slot $w={40}><LangBox>It</LangBox></Slot>
          <Slot $w={33}>
            <S w={18} h={13}><rect width="18" height="13" rx="1" fill="#dfdbd2" /><path d="M0 1l9 7 9-7M0 12l6-6M18 12l-6-6" stroke="#3f3e3a" fill="none" /></S>
          </Slot>
          <Slot $w={38}>
            <S w={20} h={16}><path d="M1 5h3l4-4v14l-4-4H1z" fill="#dfdbd2" /><g fill="none" stroke="#dfdbd2" strokeWidth="1.400"><path d="M11 5q2 3 0 6" /><path d="M14 3q3 5 0 10" /><path d="M17 1q4 7 0 14" /></g></S>
          </Slot>
          <ClockSlot $w={126}>&nbsp;dom&nbsp; 9 nov 18.45</ClockSlot>
          <Slot $w={30}>
            <S w={20} h={20}><circle cx="10" cy="10" r="6" fill="none" stroke="#dfdbd2" strokeWidth="3" /><path d="M10 0v5M10 15v5M0 10h5M15 10h5M3 3l3 3M14 14l3 3M3 17l3-3M14 6l3-3" stroke="#dfdbd2" strokeWidth="2.500" /><path d="M10 4v6" stroke="#3f3e3a" strokeWidth="3" /><path d="M10 3v6" stroke="#dfdbd2" strokeWidth="1.500" /></S>
          </Slot>
        </TrayGroup>
      </TopPanel>

      <TitleBar>
        <WinDot />
        usodelmiostileformattazioneapplicata.odt - LibreOffice Writer
        <WinButtons>
          <WinBtn>–</WinBtn>
          <WinBtn>▫</WinBtn>
          <WinBtn>×</WinBtn>
        </WinButtons>
      </TitleBar>

      <MenuBar>
        <MenuItem $w={40}><u>F</u>ile</MenuItem>
        <MenuItem $w={76}><u>M</u>odifica</MenuItem>
        <MenuItem $w={84}><u>V</u>isualizza</MenuItem>
        <MenuItem $w={72}><u>I</u>nserisci</MenuItem>
        <MenuItem $w={73}>F<u>o</u>rmato</MenuItem>
        <MenuItem $w={64}>T<u>a</u>bella</MenuItem>
        <MenuItem $w={85}><u>S</u>trumenti</MenuItem>
        <MenuItem $w={71}>Fi<u>n</u>estra</MenuItem>
        <MenuItem $w={20}><u>?</u></MenuItem>
      </MenuBar>

      <ToolRow $h={31} $line>
        {mainTools.map((t, i) => <ToolItem key={i} t={t} />)}
      </ToolRow>

      <ToolRow $h={31} $line>
        <ToolSlot $w={23}><Grip /></ToolSlot>
        <ToolSlot $w={22}><Boxed>{ic.styles}</Boxed></ToolSlot>
        <ToolSlot $w={11}><Sep /></ToolSlot>
        <Combo $w={128} $btn={21}><span>miocorpotestc</span><div><Caretish /></div></Combo>
        <ToolSlot $w={11}><Sep /></ToolSlot>
        <Combo $w={156} $btn={21}><span>Liberation Serif</span><div><Caretish /></div></Combo>
        <ToolSlot $w={10}><Sep /></ToolSlot>
        <Combo $w={66} $btn={21}><span>12</span><div><Caretish /></div></Combo>
        <ToolSlot $w={10}><Sep /></ToolSlot>
        <ToolSlot $w={24}>{ic.boldA}</ToolSlot>
        <ToolSlot $w={25}>{ic.italA}</ToolSlot>
        <ToolSlot $w={24}>{ic.underA}</ToolSlot>
      </ToolRow>

      <RulerRow>
        <Corner><S w={8} h={8}><path d="M1 0v7h7" fill="none" stroke="#666" strokeWidth="2" /></S></Corner>
        <HRuler />
      </RulerRow>

      <Workspace>
        <VRulerBox><VRuler /></VRulerBox>
        <Page>
          <CropMark />
          <Para>Titolo principale sull'uso stili personali</Para>
          <Para $mt={22}><b>Uso dello stile titolo 1</b></Para>
          <Gap $h={4} />
          {block1.map((l, i) => <Line key={i} $long={i === 6}><Words s={l} /></Line>)}
          <LastLine>a.</LastLine>
          <Para $mt={18}><i>Uso dello stile titolo 2</i></Para>
          <Gap $h={5} />
          {block1.slice(0, 4).map((l, i) => <Line key={i}><Words s={l} /></Line>)}
        </Page>
        <Filler />
        <VScroll>
          <ScrollThumb />
          <ScrollTrack />
          <ScrollEnd><Down /></ScrollEnd>
          <ScrollEnd><Up /></ScrollEnd>
          <ScrollEnd><S w={8} h={8}><rect x="1" y="1" width="6" height="6" rx="1" fill="#3a6ea5" /></S></ScrollEnd>
          <ScrollEnd><Down /></ScrollEnd>
        </VScroll>
      </Workspace>

      <ToolRow $h={31}>
        {drawTools.map((t, i) => <ToolItem key={i} t={t} />)}
      </ToolRow>

      <StatusBar>
        <StatusCell $w={127} $pl={10}>Pagina 1 / 1</StatusCell>
        <StatusCell $w={268} $pl={8}>215 parole, 1476 caratteri</StatusCell>
        <StatusCell $w={150} $pl={9}>Stile predefinito</StatusCell>
        <StatusCell $w={147} $pl={37}>Italiano (Italia)</StatusCell>
        <StatusCell $w={69} />
        <StatusCell $w={28} $pl={9}><S w={12} h={10}><rect y="1" width="9" height="8" fill="#9a9a98" /><path d="M10.500 0v10M9 .5h3M9 9.500h3" stroke="#8a8a88" /></S></StatusCell>
        <StatusCell $w={30} $pl={8}><S w={14} h={16}><path d="M.5.500h9l4 4v11H.5z" fill="#f4f3fb" stroke="#7a6fd0" /><path d="M2 5h10M2 9h10M2 13h10" stroke="#7a6fd0" /><path d="M5.500 2v9" stroke="#e01010" strokeWidth="3" /><circle cx="5.500" cy="14" r="1.200" fill="#e01010" /></S></StatusCell>
        <StatusCell $w={29} />
        <StatusCell $w={251} />
        <StatusCell $w={75} $pl={16}>
          <S w={52} h={14}><g fill="#fff" stroke="#8a8a88"><path d="M.5 2.500h5l2 2v8h-7z" /><path d="M13.500 2.500h5l2 2v8h-7zM21.500 2.500h5l2 2v8h-7z" /><path d="M35.500 4.500l7-2v10l-7 0zM42.500 2.500h7v10h-7z" /></g></S>
        </StatusCell>
        <StatusCell $w={144} $pl={9}>
          <S w={126} h={14}><path d="M0 7h8M118 7h8M122 3v8" stroke="#8a8a88" strokeWidth="2" /><path d="M15 7h97" stroke="#b5b4b0" strokeWidth="2" /><path d="M29 2v10M64 2v10" stroke="#a5a4a0" strokeWidth="1.500" /><circle cx="50" cy="7" r="3.800" fill="#fff" stroke="#8a8a88" /></S>
        </StatusCell>
        <StatusCell $w={48} $pl={11} $line={false}>80%</StatusCell>
      </StatusBar>

      <Taskbar>
        <TaskStart><S w={16} h={16}><rect x="1" y="1" width="14" height="3" fill="#d9d3c8" /><rect x="1" y="5" width="14" height="10" fill="#a843b0" /><rect x="1" y="5" width="3" height="10" fill="#7a2f80" /></S></TaskStart>
        <TaskItem $w={191}><Firefox s={17} /><span><Bars>||</Bars> Generatore di tes...</span></TaskItem>
        <TaskItem $w={190} $pl={12} $active={1}><DocSmall />Senza nome 1 - Libr...</TaskItem>
        <TaskItem $w={193} $pl={13} $active={2}><DocSmall />usodelmiostilefor...</TaskItem>
        <TaskRight>
          <S w={17} h={24}><path d="M2 4h13l-2 19H4z" fill="#b8b7b2" stroke="#807f7a" strokeDasharray="2 1" /><path d="M1 3h15" stroke="#d5d4cf" strokeWidth="2" /><path d="M5 8l4 3 3-2-4 5 3 5" stroke="#7a7974" fill="none" /></S>
          <HGap $w={5} />
          <Switcher><S w={26} h={20}><path d="M1 0h24v20H1z" fill="#f08d62" /><path d="M0 0v20" stroke="#123" strokeWidth="2" /><path d="M14 5h6M14 8h6M14 11h6M14 14h6" stroke="#e07b4f" /></S></Switcher>
          <SwitcherRest />
        </TaskRight>
      </Taskbar>

      <GhostWindow>
        <GhostTitle />
        <GhostInner />
      </GhostWindow>

      <Dialog>
        <DialogTitle>
          <WinDot $c="#c5c3bb" />
          Stile di paragrafo: miocorpotesto
          <CloseBtn>×</CloseBtn>
        </DialogTitle>
        <TabRow $pl={8} $mt={8}>
          <Tab $w={120} $lh={24}>Posizione</Tab>
          <Tab $w={221} $lh={24}>Struttura e numerazione</Tab>
          <Tab $w={130} $lh={24}>Tabulazioni</Tab>
          <Tab $w={133} $lh={24}>Capolettera</Tab>
          <Tab $w={103} $lh={24}>Sfondo</Tab>
          <Tab $w={90} $lh={24}>Bordi</Tab>
        </TabRow>
        <TabRow $pl={10}>
          <Tab $w={100}>Gestione</Tab>
          <Tab $w={173} $on>Rientri e spaziature</Tab>
          <Tab $w={130}>Allineamento</Tab>
          <Tab $w={138}>Flusso di testo</Tab>
          <Tab $w={101}>Carattere</Tab>
          <Tab $w={153}>Effetto carattere</Tab>
        </TabRow>
        <Panel>
          <FormCol>
            <Heading>Rientro</Heading>
            <FieldRow>
              <FieldLabel><u>P</u>rima del testo:</FieldLabel>
              <Spin><span>0,00cm</span><SpinBtns><Up /><Down /></SpinBtns></Spin>
            </FieldRow>
            <FieldRow>
              <FieldLabel><u>D</u>opo il testo:</FieldLabel>
              <Spin><span>0,00cm</span><SpinBtns><Up /><Down /></SpinBtns></Spin>
            </FieldRow>
            <FieldRow $mb={0}>
              <FieldLabel>Prima <u>r</u>iga:</FieldLabel>
              <Spin><span>1<TextCaret />,00cm</span><SpinBtns><Up /><Down /></SpinBtns></Spin>
            </FieldRow>
            <CheckRow $mt={11}><Check /><CheckText><u>A</u>utomatico</CheckText></CheckRow>
            <Heading $mt={20}>Distanza</Heading>
            <FieldRow>
              <FieldLabel><u>S</u>opra il paragrafo:</FieldLabel>
              <Spin><span>0,00cm</span><SpinBtns><Up /><Down /></SpinBtns></Spin>
            </FieldRow>
            <FieldRow $mb={0}>
              <FieldLabel>S<u>o</u>tto il paragrafo:</FieldLabel>
              <Spin><span>0,00cm</span><SpinBtns><Up /><Down /></SpinBtns></Spin>
            </FieldRow>
            <CheckRow $mt={11}><Check /><CheckText><u>N</u>on aggiungere spazi tra i paragrafi dello stesso stile</CheckText></CheckRow>
            <Heading $mt={20}>Interlinea</Heading>
            <FieldRow $mb={0}>
              <Select>
                <SelectText>Doppia</SelectText>
                <SelectBtn><Up /><Down /></SelectBtn>
                <DiLabel>di</DiLabel>
              </Select>
              <Spin $off><span /><SpinBtns><Up $off /><Down $off /></SpinBtns></Spin>
            </FieldRow>
            <Heading $mt={17}>Conformità registro</Heading>
            <CheckRow $mt={9}><Check /><CheckText>A<u>t</u>tiva</CheckText></CheckRow>
          </FormCol>
          <Preview>
            <PBar $w={167} $mt={0} />
            <PBar $w={167} $mt={12} />
            <PBar $w={167} $mt={11} />
            <PBar $w={134} $h={14} $mt={11} $ml={8} $dark />
            <PBar $w={151} $mt={24} $dark />
            <PBar $w={84} $h={14} $mt={23} $dark />
            <PBar $w={167} $mt={23} />
            <PBar $w={167} $mt={12} />
          </Preview>
        </Panel>
        <ButtonRow>
          <DlgButton $ok>O<u>K</u></DlgButton>
          <DlgButton><u>A</u>ssegna</DlgButton>
          <DlgButton>Annulla</DlgButton>
          <DlgButton><u>?</u></DlgButton>
          <DlgButton>Ri<u>p</u>ristina</DlgButton>
          <DlgButton><u>S</u>tandard</DlgButton>
        </ButtonRow>
      </Dialog>
    </Desktop>
  );
}
